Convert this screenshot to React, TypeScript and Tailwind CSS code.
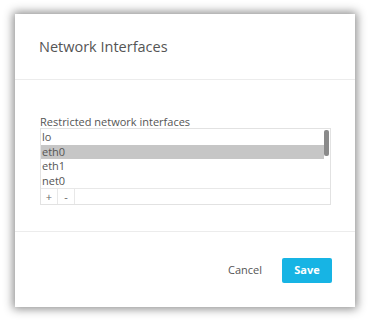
const interfaces = ["lo", "eth0", "eth1", "net0"];

const NetworkInterfacesDialog = () => {
  const selected = "eth0";

  return (
    <div className="w-[340px] h-[293px] bg-white flex flex-col shadow-[0_0_9px_2px_rgba(0,0,0,0.45)] font-['Open_Sans',sans-serif]">
      <div className="h-[66px] shrink-0 flex items-center pl-6 border-b border-[#ececec]">
        <h2 className="text-[14.5px] text-[#555]">Network Interfaces</h2>
      </div>
      <div className="flex-1 pt-[35px] px-[25px]">
        <div className="text-[11px] leading-[13px] text-[#555]">Restricted network interfaces</div>
        <div className="border border-[#e2e2e2] w-[291px]">
          <div className="relative h-[59px] pt-px">
            {interfaces.map((name) => (
              <div
                key={name}
                className={`h-[14.5px] leading-[14.5px] pl-px text-[11px] text-[#555] mr-[6px] ${
                  name === selected ? "bg-[#c6c6c6]" : ""
                }`}
              >
                {name}
              </div>
            ))}
            <div className="absolute right-[1px] top-px w-[5px] h-[26px] rounded-[2px] bg-[#8a8a8a]" />
          </div>
          <div className="flex h-[16px] border-t border-[#e8e8e8] text-[11px] text-[#666]">
            <button type="button" className="w-[17px] border-r border-[#e8e8e8] flex items-center justify-center leading-none">
              +
            </button>
            <button type="button" className="w-[17px] border-r border-[#e8e8e8] flex items-center justify-center leading-none">
              -
            </button>
          </div>
        </div>
      </div>
      <div className="h-[76px] shrink-0 border-t border-[#ececec] flex items-start justify-end pt-[26px] pr-[23px] gap-[20px]">
        <button type="button" className="h-[25px] text-[11px] text-[#555]">
          Cancel
        </button>
        <button type="button" className="w-[50px] h-[25px] rounded-[2px] bg-[#17b4e4] text-white text-[11px] font-bold">
          Save
        </button>
      </div>
    </div>
  );
};

export default function App() {
  return (
    <div className="w-[370px] h-[322px] bg-white pt-[14px] pl-[15px]">
      <NetworkInterfacesDialog />
    </div>
  );
}
